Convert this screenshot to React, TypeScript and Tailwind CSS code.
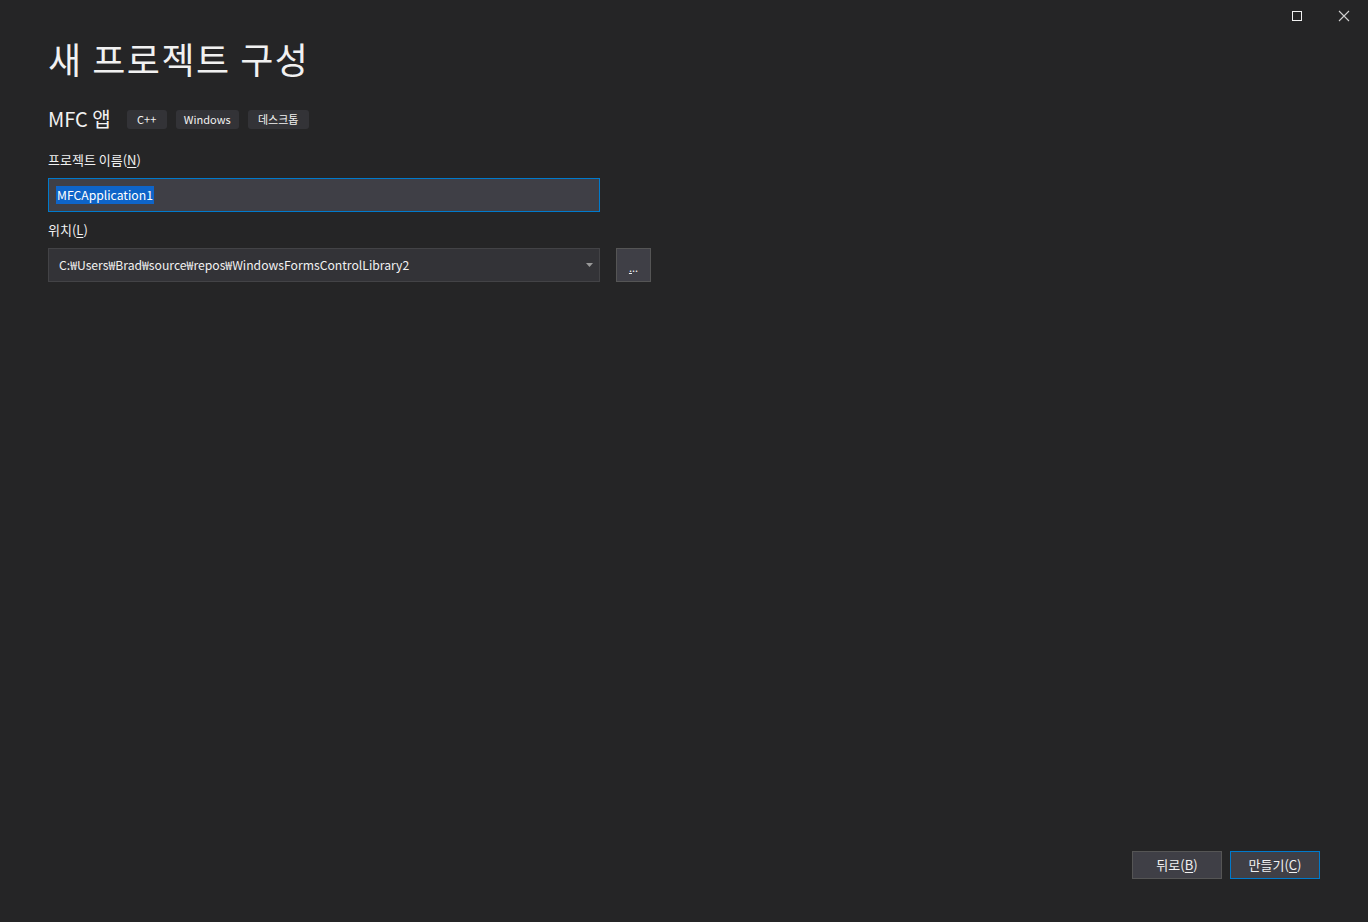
const kr = { fontFamily: '"Noto Sans CJK KR", "Noto Sans", sans-serif' };

function Key({ k }: { k: string }) {
  return (
    <>
      (<span className="underline underline-offset-2">{k}</span>)
    </>
  );
}

const tags = [
  { label: "C++", w: "w-[40px]" },
  { label: "Windows", w: "w-[63px]" },
  { label: "데스크톱", w: "w-[61px]" },
];

export default function App() {
  return (
    <div className="w-full h-[922px] bg-[#252526] text-[#f1f1f1] flex flex-col" style={kr}>
      <div className="h-[32px] flex justify-end items-center">
        <div className="w-[46px] h-[32px] flex items-center justify-center">
          <div className="w-[10px] h-[10px] border border-[#f1f1f1]" />
        </div>
        <div className="w-[48px] h-[32px] flex items-center justify-center">
          <svg width="12" height="12" viewBox="0 0 12 12" stroke="#d0d0d0" strokeWidth="1.1">
            <path d="M1 1 L11 11 M11 1 L1 11" />
          </svg>
        </div>
      </div>

      <div className="pl-[48px] flex flex-col">
        <h1 className="text-[36px] leading-[48px] tracking-[1.5px] font-normal mt-[2px]">새 프로젝트 구성</h1>

        <div className="flex items-center mt-[25px] h-[24px]">
          <span className="text-[20px] mr-[16px]">MFC 앱</span>
          <div className="flex gap-[9px]">
            {tags.map((t) => (
              <span
                key={t.label}
                className={`${t.w} h-[19px] rounded-[3px] bg-[#333337] text-[11px] leading-[19px] text-center text-[#f1f1f1]`}
              >
                {t.label}
              </span>
            ))}
          </div>
        </div>

        <label className="text-[13px] leading-[18px] mt-[20px]">
          프로젝트 이름<Key k="N" />
        </label>
        <div className="mt-[9px] w-[552px] h-[34px] bg-[#3f3f46] border border-[#007acc] flex items-center pl-[7px]">
          <span className="bg-[#0e64c8] text-white text-[12.2px] leading-[18px] px-[1px]">MFCApplication1</span>
        </div>

        <label className="text-[13px] leading-[18px] mt-[9px]">
          위치<Key k="L" />
        </label>
        <div className="mt-[9px] flex items-center gap-[16px]">
          <div className="w-[552px] h-[34px] bg-[#333337] border border-[#434346] flex items-center pl-[10px] pr-[6px]">
            <span className="text-[12.2px] flex-1">C:₩Users₩Brad₩source₩repos₩WindowsFormsControlLibrary2</span>
            <svg width="7" height="4" viewBox="0 0 7 4">
              <path d="M0 0 H7 L3.5 4 Z" fill="#999999" />
            </svg>
          </div>
          <button className="w-[35px] h-[34px] bg-[#3f3f46] border border-[#555555] text-[11px] leading-none flex items-center justify-center pt-[4px]">
            <span className="underline">.</span>..
          </button>
        </div>
      </div>

      <div className="mt-auto mb-[43px] flex justify-end gap-[8px] pr-[48px]">
        <button className="w-[90px] h-[28px] bg-[#3f3f46] border border-[#555555] text-[13px]">
          뒤로<Key k="B" />
        </button>
        <button className="w-[90px] h-[28px] bg-[#3f3f46] border border-[#007acc] text-[13px]">
          만들기<Key k="C" />
        </button>
      </div>
    </div>
  );
}
